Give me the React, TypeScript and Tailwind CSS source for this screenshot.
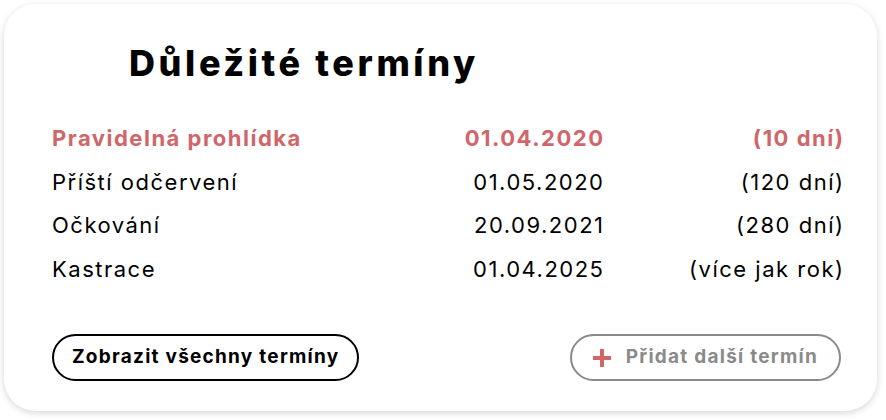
const ROWS = [
  { name: 'Pravidelná prohlídka', date: '01.04.2020', left: '(10 dní)', urgent: true },
  { name: 'Příští odčervení', date: '01.05.2020', left: '(120 dní)' },
  { name: 'Očkování', date: '20.09.2021', left: '(280 dní)' },
  { name: 'Kastrace', date: '01.04.2025', left: '(více jak rok)' },
]

export default function App() {
  return (
    <div className="w-[886px] h-[420px] bg-white p-1 font-['Inter',sans-serif]">
      <div className="w-[873px] h-[407px] rounded-[32px] bg-white shadow-[0_2px_7px_rgba(0,0,0,0.16)] pt-[37px] pl-12 pr-[34px] pb-[30px] flex flex-col">
        {/* Title */}
        <h2 className="ml-[77px] text-[36px] leading-[44px] font-extrabold text-black tracking-[3.6px]">
          Důležité termíny
        </h2>

        {/* Dates */}
        <div className="mt-[32px] grid grid-cols-[1fr_160px_240px] text-[22px] leading-[43.5px] tracking-[1.5px]">
          {ROWS.map(row => (
            <div key={row.name} className={`contents ${row.urgent ? 'text-[#d0666a] font-bold' : 'text-black'}`}>
              <span>{row.name}</span>
              <span className="text-right -mr-[1.5px]">{row.date}</span>
              <span className="text-right -mr-[1.5px]">{row.left}</span>
            </div>
          ))}
        </div>

        {/* Actions */}
        <div className="mt-auto flex items-center justify-between pr-[2px]">
          <button className="h-[47px] px-[18px] rounded-full border-2 border-black text-[19px] font-bold text-black tracking-[1.25px]">
            Zobrazit všechny termíny
          </button>
          <button className="h-[47px] pl-[21px] pr-[21px] rounded-full border-2 border-[#8a8a8a] text-[19px] font-bold text-[#8a8a8a] tracking-[1.25px] flex items-center gap-[15px]">
            <svg className="w-[18px] h-[18px]" viewBox="0 0 18 18">
              <path d="M7 0h4v7h7v4h-7v7H7v-7H0V7h7z" fill="#d0666a" />
            </svg>
            Přidat další termín
          </button>
        </div>
      </div>
    </div>
  )
}
